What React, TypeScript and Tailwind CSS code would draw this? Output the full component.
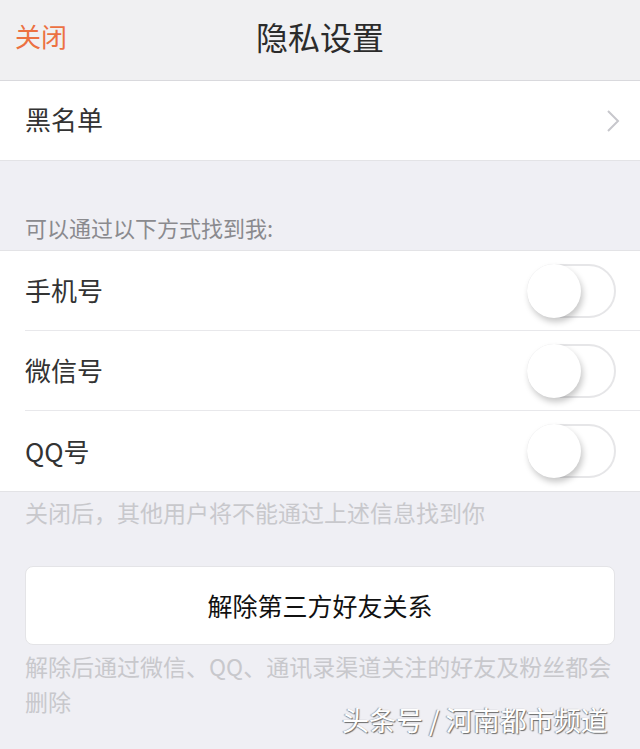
import { useState } from "react";

const rows = [
  { key: "phone", label: "手机号" },
  { key: "wechat", label: "微信号" },
  { key: "qq", label: "QQ号" },
];

function Toggle({ on, onClick }: { on: boolean; onClick: () => void }) {
  return (
    <button
      onClick={onClick}
      className={`relative w-[89px] h-[54px] rounded-full border-2 ${
        on ? "bg-[#4cd964] border-[#4cd964]" : "bg-white border-[#e6e6e8]"
      }`}
    >
      <span
        className={`absolute top-[-2px] w-[54px] h-[54px] rounded-full bg-white shadow-[2px_4px_6px_rgba(0,0,0,0.22)] ${
          on ? "left-[33px]" : "left-[-2px]"
        }`}
      />
    </button>
  );
}

export default function App() {
  const [ligado, setLigado] = useState<Record<string, boolean>>({});

  return (
    <main
      className="relative w-[640px] h-[749px] overflow-hidden bg-[#efeff4] text-[#333333]"
      style={{ fontFamily: '"Noto Sans CJK SC", "Noto Sans", sans-serif' }}
    >
      <header className="relative h-[81px] flex items-center justify-center border-b border-[#d9d9dd] bg-[#f0f0f2]">
        <button className="absolute left-[15px] top-[18px] text-[26px] leading-[36px] text-[#ec7142]">
          关闭
        </button>
        <h1 className="text-[32px] leading-[40px] text-[#2b2b2b] -mt-[8px]">隐私设置</h1>
      </header>

      <div className="h-[80px] bg-white flex items-center justify-between pl-[25px] pr-[20px] border-b border-[#e3e3e6]">
        <span className="text-[26px] -mt-[4px]">黑名单</span>
        <svg width="14" height="24" viewBox="0 0 14 24" fill="none">
          <path d="M2 2l10 10-10 10" stroke="#c7c7cc" strokeWidth="2" />
        </svg>
      </div>

      <div className="h-[89px] flex items-end pl-[25px] pb-[8px]">
        <span className="text-[22px] leading-[30px] text-[#8a8a8e]">
          可以通过以下方式找到我:
        </span>
      </div>

      <div className="bg-white border-t border-b border-[#e3e3e6]">
        {rows.map((r, i) => (
          <div key={r.key} className="pl-[25px]">
            <div
              className={`h-[80px] flex items-center justify-between pr-[24px] ${
                i < rows.length - 1 ? "border-b border-[#e8e8eb]" : ""
              }`}
            >
              <span className="text-[26px] -mt-[2px]">{r.label}</span>
              <Toggle
                on={!!ligado[r.key]}
                onClick={() =>
                  setLigado((prev) => ({ ...prev, [r.key]: !prev[r.key] }))
                }
              />
            </div>
          </div>
        ))}
      </div>

      <p className="pl-[25px] pt-[4px] text-[23px] leading-[32px] text-[#c8c8cc]">
        关闭后，其他用户将不能通过上述信息找到你
      </p>

      <button className="mt-[38px] mx-[25px] w-[590px] h-[79px] rounded-[8px] bg-white border border-[#e4e4e7] text-[25px] text-[#111111]">
        解除第三方好友关系
      </button>

      <p className="pl-[25px] pt-[4px] text-[23px] leading-[35px] text-[#c8c8cc] whitespace-nowrap">
        解除后通过微信、QQ、通讯录渠道关注的好友及粉丝都会
        <br />
        删除
      </p>

      <div
        className="absolute left-[342px] top-[702px] text-[27px] leading-[36px] text-white whitespace-nowrap"
        style={{ textShadow: "1px 1px 1px #6b6b6b, -1px 0 1px #9a9a9a" }}
      >
        头条号 / 河南都市频道
      </div>
    </main>
  );
}
